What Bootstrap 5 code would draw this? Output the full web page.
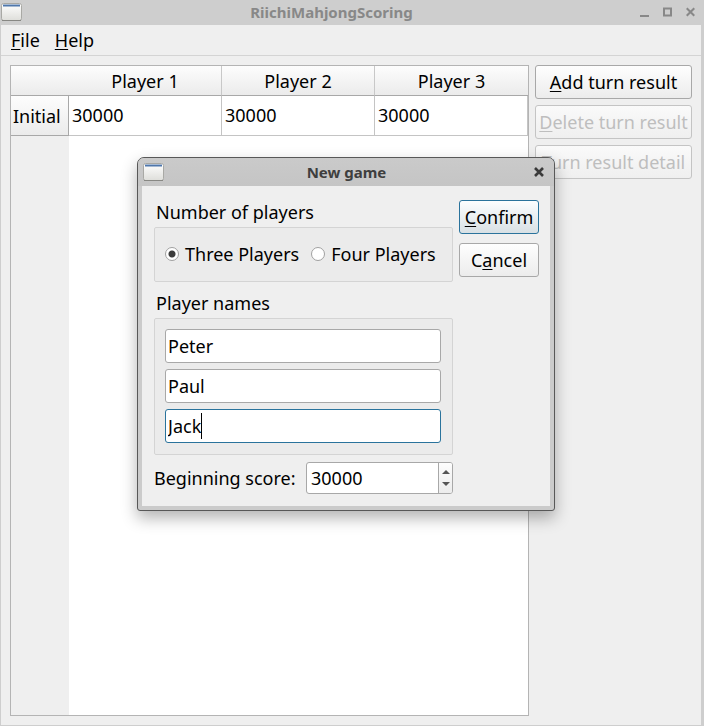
<!DOCTYPE html>
<html lang="en">
<head>
<meta charset="utf-8">
<meta name="viewport" content="width=device-width, initial-scale=1">
<title>RiichiMahjongScoring</title>
<link href="https://cdn.jsdelivr.net/npm/bootstrap@5.3.0/dist/css/bootstrap.min.css" rel="stylesheet">
<style>
  body { font: 18px/24px "Noto Sans", sans-serif; color: #000; background: #efefef; }
  .app-window { border: solid #cecece; border-width: 0 3px 1px 1px; }
  .title-strip { height: 25px; margin: 0 -3px 0 -1px; padding: 0 9px 2px 1px; background: #cecece; color: #888; font-size: 15px; font-weight: 700; }
  .win-controls { gap: 14px; }
  .win-controls button, .dialog-close { background: none; border: 0; padding: 0; line-height: 0; color: inherit; }
  .menu-strip { height: 31px; padding: 0 10px; border-bottom: 1px solid #d4d4d4; gap: 15px; }
  .menu-strip a { color: #000; text-decoration: none; }
  u { text-decoration: underline; text-decoration-thickness: 1px; text-underline-offset: 2px; text-decoration-skip-ink: none; }
  .work-area { padding: 9px; gap: 6px; }
  .score-pane { border: 1px solid #b4b4b4; background: linear-gradient(to right, #efefef 58px, #fff 58px); }
  .score-grid { width: 100%; table-layout: fixed; border-collapse: separate; border-spacing: 0; }
  .score-grid thead th { height: 30px; padding: 1px 0 0; text-align: center; font-weight: 400; background: linear-gradient(#fdfdfd, #ebebeb); border-bottom: 1px solid #a8a8a8; border-right: 1px solid #c8c8c8; }
  .score-grid thead th:last-child, .score-grid thead td { border-right: 0; }
  .score-grid thead td { padding: 0; background: linear-gradient(#fdfdfd, #ebebeb); border-bottom: 1px solid #a8a8a8; }
  .score-grid tbody th { height: 40px; padding: 0 0 0 2px; font-weight: 400; background: linear-gradient(#fdfdfd, #ebebeb); border-bottom: 1px solid #a8a8a8; border-right: 1px solid #a8a8a8; }
  .score-grid tbody td { padding: 0 3px 2px; background: #fff; border-bottom: 1px solid #c4c4c4; border-right: 1px solid #c4c4c4; }
  .score-grid .row-label { width: 58px; }
  .side-actions { width: 157px; gap: 6px; }
  .btn-tool { --bs-btn-padding-x: 0; --bs-btn-padding-y: 4px; --bs-btn-font-size: 18px; --bs-btn-line-height: 24px; --bs-btn-border-radius: 3px;
    --bs-btn-color: #000; --bs-btn-border-color: #a8a8a8; --bs-btn-hover-border-color: #888; --bs-btn-disabled-color: #bebebe; --bs-btn-disabled-border-color: #c4c4c4; --bs-btn-disabled-opacity: 1;
    background: linear-gradient(#fefefe, #ececec); white-space: nowrap; }
  .btn-tool:disabled { background: linear-gradient(#fafafa, #efefef); }
  .btn-tool.is-default { --bs-btn-border-color: #2a739c; background: linear-gradient(#fcfeff, #d8e0e4); }
  .game-dialog { left: 137px; top: 157px; width: 418px; border: 1px solid #585858; border-radius: 7px 7px 3px 3px; background: #cbcbcb; box-shadow: 0 7px 16px rgba(0,0,0,.3); overflow: hidden; }
  .dialog-title { height: 28px; padding: 0 10px 0 5px; color: #3e3e3e; background: linear-gradient(#cacaca, #c5c5c5); font-size: 15px; font-weight: 700; }
  .dialog-title div { padding-right: 6px; }
  .dialog-form { margin: 0 4px 4px; padding: 14px 10px 12px 12px; background: #efefef; gap: 6px; }
  .form-side { width: 299px; }
  .button-side { width: 80px; gap: 9px; }
  .form-side legend { float: none; margin: 0; padding: 0 2px; font-size: 18px; line-height: 24px; }
  .form-side fieldset + fieldset { margin-top: 9px; }
  .group-frame { border: 1px solid #d4d4d4; border-radius: 2px; background: #ebebeb; }
  .player-count { height: 55px; margin-top: 3px; padding: 0 10px 2px; gap: 12px; }
  .player-count label { gap: 6px; }
  .player-count input { appearance: none; width: 14px; height: 14px; margin: 0; border: 1px solid #a0a0a0; border-radius: 50%; background: #fff; }
  .player-count input:checked { background: radial-gradient(circle, #3c3c3c 3px, #fff 4px); }
  .name-list { margin-top: 3px; padding: 10px 11px 11px 10px; gap: 6px; }
  .line-edit { height: 34px; padding: 0 2px; border: 1px solid #a8a8a8; border-radius: 3px; background: #fff; color: #000; font-size: 18px; line-height: 24px; }
  .line-edit:focus { box-shadow: none; }
  .line-edit.is-active { border-color: #2a739c; caret-color: transparent; }
  .text-caret { left: 36px; top: 4px; width: 1px; height: 26px; background: #000; }
  .spin-box { width: 147px; height: 32px; border: 1px solid #a8a8a8; border-radius: 3px; background: #fff; overflow: hidden; }
  .spin-box input { border: 0; padding: 0 4px; min-width: 0; outline: 0; background: none; }
  .spin-arrows { width: 14px; border-left: 1px solid #a8a8a8; background: linear-gradient(#fdfdfd, #ececec); }
  .spin-arrows button { border: 0; padding: 0; background: none; line-height: 0; }
  .score-line { margin-top: 7px; }
</style>
<script src="https://cdn.jsdelivr.net/npm/bootstrap@5.3.0/dist/js/bootstrap.bundle.min.js"></script>
</head>
<body>
<div class="app-window d-flex flex-column vh-100">
  <header class="title-strip d-flex align-items-center">
    <svg width="22" height="18" viewBox="0 0 22 18" aria-hidden="true"><defs><linearGradient id="paper" x2="0" y2="1"><stop stop-color="#fff"/><stop offset="1" stop-color="#dededa"/></linearGradient></defs><rect x=".5" y=".5" width="20" height="17" rx="2" fill="url(#paper)" stroke="#a9a9a5"/><path d="M1 17.5H20" stroke="#888884"/><path d="M2 2.5H19" stroke="#4f77ab" stroke-width="2"/></svg>
    <div class="flex-fill text-center">RiichiMahjongScoring</div>
    <div class="win-controls d-flex">
      <button type="button" aria-label="Minimize"><svg width="9" height="10"><path d="M0 9H9" stroke="#888" stroke-width="2"/></svg></button>
      <button type="button" aria-label="Maximize"><svg width="9" height="10"><rect x="1" y="1.5" width="7" height="7" fill="none" stroke="#888" stroke-width="2"/></svg></button>
      <button type="button" aria-label="Close"><svg width="9" height="10"><path d="M.7 1.2L8.3 8.8M8.3 1.2L.7 8.8" stroke="#888" stroke-width="2.2"/></svg></button>
    </div>
  </header>
  <nav class="menu-strip d-flex align-items-center flex-shrink-0" aria-label="Main menu">
    <a href="#"><u>F</u>ile</a>
    <a href="#"><u>H</u>elp</a>
  </nav>
  <main class="work-area d-flex flex-fill">
    <div class="score-pane flex-fill">
      <table class="score-grid">
        <thead><tr><td class="row-label"></td><th scope="col">Player 1</th><th scope="col">Player 2</th><th scope="col">Player 3</th></tr></thead>
        <tbody><tr><th scope="row">Initial</th><td>30000</td><td>30000</td><td>30000</td></tr></tbody>
      </table>
    </div>
    <div class="side-actions d-flex flex-column flex-shrink-0">
      <button type="button" class="btn btn-tool"><u>A</u>dd turn result</button>
      <button type="button" class="btn btn-tool" disabled><u>D</u>elete turn result</button>
      <button type="button" class="btn btn-tool" disabled><u>T</u>urn result detail</button>
    </div>
  </main>
</div>

<div class="game-dialog position-absolute" role="dialog" aria-labelledby="dialogTitle">
  <div class="dialog-title d-flex align-items-center">
    <svg width="22" height="18" viewBox="0 0 22 18" aria-hidden="true"><rect x=".5" y=".5" width="20" height="17" rx="2" fill="url(#paper)" stroke="#a9a9a5"/><path d="M1 17.5H20" stroke="#888884"/><path d="M2 2.5H19" stroke="#4f77ab" stroke-width="2"/></svg>
    <div id="dialogTitle" class="flex-fill text-center">New game</div>
    <button type="button" class="dialog-close" aria-label="Close"><svg width="10" height="10"><path d="M1 1L9 9M9 1L1 9" stroke="#3a3a3a" stroke-width="2.6"/></svg></button>
  </div>
  <form class="dialog-form d-flex">
    <div class="form-side">
      <fieldset>
        <legend>Number of players</legend>
        <div class="group-frame player-count d-flex align-items-center">
          <label class="d-flex align-items-center"><input type="radio" name="count" checked>Three Players</label>
          <label class="d-flex align-items-center"><input type="radio" name="count">Four Players</label>
        </div>
      </fieldset>
      <fieldset>
        <legend>Player names</legend>
        <div class="group-frame name-list d-flex flex-column">
          <input type="text" class="form-control line-edit" value="Peter" aria-label="Player 1 name">
          <input type="text" class="form-control line-edit" value="Paul" aria-label="Player 2 name">
          <div class="position-relative">
            <input type="text" class="form-control line-edit is-active" value="Jack" aria-label="Player 3 name">
            <span class="text-caret position-absolute"></span>
          </div>
        </div>
      </fieldset>
      <div class="score-line d-flex align-items-center justify-content-between">
        <label for="startScore">Beginning score:</label>
        <div class="spin-box d-flex">
          <input id="startScore" class="flex-fill" type="text" inputmode="numeric" value="30000">
          <div class="spin-arrows d-flex flex-column justify-content-evenly align-items-center flex-shrink-0">
            <button type="button" aria-label="Increase"><svg width="8" height="4"><path d="M0 4L4 0L8 4Z" fill="#555"/></svg></button>
            <button type="button" aria-label="Decrease"><svg width="8" height="4"><path d="M0 0L4 4L8 0Z" fill="#555"/></svg></button>
          </div>
        </div>
      </div>
    </div>
    <div class="button-side d-flex flex-column">
      <button type="submit" class="btn btn-tool is-default"><u>C</u>onfirm</button>
      <button type="button" class="btn btn-tool">C<u>a</u>ncel</button>
    </div>
  </form>
</div>
</body>
</html>
